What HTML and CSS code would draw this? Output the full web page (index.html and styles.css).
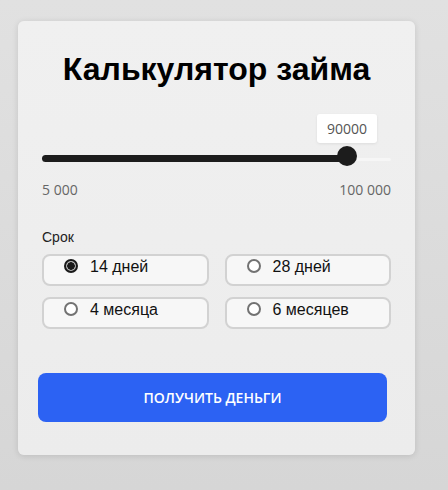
FILE: index.html
```html
<!DOCTYPE html>
<html lang="ru">
<head>
<meta charset="utf-8">
<link rel="stylesheet" href="styles.css">
</head>
<body>
<div class="card">
  <h1 class="title">Калькулятор займа</h1>
  <div class="slider">
    <div class="track-rest"></div>
    <div class="track-fill" style="width: 305px"></div>
    <div class="thumb" style="left: 305px">
      <div class="tip">90000</div>
    </div>
  </div>
  <div class="range-labels">
    <span>5 000</span>
    <span>100 000</span>
  </div>
  <div class="term-label">Срок</div>
  <div class="options">
    <label class="option"><span class="radio checked"></span><span class="opt-text">14 дней</span></label>
    <label class="option"><span class="radio"></span><span class="opt-text">28 дней</span></label>
    <label class="option"><span class="radio"></span><span class="opt-text">4 месяца</span></label>
    <label class="option"><span class="radio"></span><span class="opt-text">6 месяцев</span></label>
  </div>
  <button class="cta">ПОЛУЧИТЬ ДЕНЬГИ</button>
</div>
</body>
</html>
```
FILE: styles.css
```css
html, body {
  margin: 0;
  padding: 0;
}
body {
  background: linear-gradient(#e1e1e1, #d6d6d6);
  font-family: "Liberation Sans", Arial, sans-serif;
  width: 448px;
  height: 490px;
  overflow: hidden;
  padding-top: 21px;
  padding-left: 18px;
  box-sizing: border-box;
}
.card {
  width: 397px;
  box-sizing: border-box;
  background: linear-gradient(#f0f0f0, #ececec);
  border-radius: 6px;
  box-shadow: 0 1px 6px rgba(0,0,0,0.12);
  padding: 30px 24px 33px 24px;
}
.title {
  margin: 0;
  font-size: 32px;
  line-height: 37px;
  font-weight: bold;
  text-align: center;
  color: #000;
}
.slider {
  position: relative;
  height: 20px;
  margin-top: 61px;
}
.track-rest {
  position: absolute;
  left: 0;
  right: 0;
  top: 9px;
  height: 3px;
  background: #f6f6f6;
  border-radius: 2px;
}
.track-fill {
  position: absolute;
  left: 0;
  top: 6px;
  height: 7px;
  background: #1c1c1c;
  border-radius: 4px;
}
.thumb {
  position: absolute;
  top: -3px;
  width: 20px;
  height: 20px;
  margin-left: -10px;
  border-radius: 50%;
  background: #1c1c1c;
}
.tip {
  position: absolute;
  bottom: 23px;
  left: 50%;
  transform: translateX(-50%);
  width: 60px;
  height: 29px;
  background: #fff;
  border-radius: 3px;
  box-shadow: 0 1px 3px rgba(0,0,0,0.08);
  font-family: "Open Sans", sans-serif;
  font-size: 14px;
  line-height: 29px;
  text-align: center;
  color: #555;
}
.range-labels {
  display: flex;
  justify-content: space-between;
  margin-top: 11px;
  font-family: "Open Sans", sans-serif;
  font-size: 14px;
  line-height: 20px;
  color: #666;
}
.term-label {
  margin-top: 29px;
  font-size: 14px;
  line-height: 16px;
  color: #222;
}
.options {
  display: grid;
  grid-template-columns: 1fr 1fr;
  column-gap: 16px;
  row-gap: 11px;
  margin-top: 9px;
}
.option {
  display: flex;
  align-items: flex-start;
  height: 32px;
  box-sizing: border-box;
  border: 2px solid #d2d2d2;
  border-radius: 8px;
  background: #f7f7f7;
  padding: 2px 0 0 20px;
}
.radio {
  width: 14px;
  height: 14px;
  box-sizing: border-box;
  border: 2px solid #727272;
  border-radius: 50%;
  background: #fff;
  margin-top: 1px;
  flex: none;
}
.radio.checked {
  border: 2px solid #1a1a1a;
  background: radial-gradient(circle, #1a1a1a 0 3.5px, #b5b5b5 4px);
}
.opt-text {
  margin-left: 12px;
  font-size: 16px;
  line-height: 18px;
  color: #111;
}
.cta {
  display: block;
  width: 349px;
  height: 49px;
  margin: 44px 0 0 -4px;
  border: none;
  border-radius: 8px;
  background: #2c62f3;
  color: #fff;
  font-family: "Open Sans", sans-serif;
  font-size: 14px;
  font-weight: 600;
  letter-spacing: 0;
}
```
